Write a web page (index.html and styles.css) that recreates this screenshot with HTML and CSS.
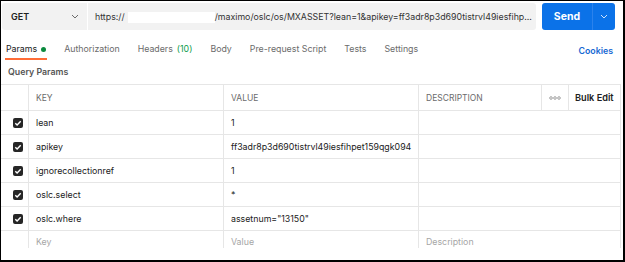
FILE: index.html
```html
<!DOCTYPE html>
<html lang="en">
<head>
    <meta charset="UTF-8">
    <meta name="viewport" content="width=device-width, initial-scale=1.0">
    <title>Request - Params</title>
    <link rel="stylesheet" href="styles.css">
</head>
<body>
    <div class="frame">
        <div class="topbar">
            <div class="method">
                <span>GET</span>
                <svg class="chev" width="8" height="5" viewBox="0 0 8 5"><path d="M1 1l3 3 3-3" fill="none" stroke="#6b6b6b" stroke-width="1"/></svg>
            </div>
            <div class="url">https://<span class="redact"></span>/maximo/oslc/os/MXASSET?lean=1&amp;apikey=ff3adr8p3d690tistrvl49iesfihp...</div>
            <div class="send">
                <span class="send-label">Send</span>
                <span class="send-more">
                    <svg width="8" height="5" viewBox="0 0 8 5"><path d="M1 1l3 3 3-3" fill="none" stroke="#cfe3fb" stroke-width="1"/></svg>
                </span>
            </div>
        </div>

        <div class="tabs">
            <span class="tab active">Params <i class="dot"></i></span>
            <span class="tab">Authorization</span>
            <span class="tab">Headers <em>(10)</em></span>
            <span class="tab">Body</span>
            <span class="tab">Pre-request Script</span>
            <span class="tab">Tests</span>
            <span class="tab">Settings</span>
            <span class="cookies">Cookies</span>
        </div>

        <div class="section-title">Query Params</div>

        <div class="params">
            <div class="row head">
                <div class="cell check"></div>
                <div class="cell">KEY</div>
                <div class="cell">VALUE</div>
                <div class="cell">DESCRIPTION</div>
                <div class="cell more">
                    <svg width="12" height="4" viewBox="0 0 12 4"><g fill="none" stroke="#8a8a8a" stroke-width="0.8"><circle cx="2" cy="2" r="1.3"/><circle cx="6" cy="2" r="1.3"/><circle cx="10" cy="2" r="1.3"/></g></svg>
                </div>
                <div class="cell bulk">Bulk Edit</div>
            </div>
            <div class="row">
                <div class="cell check"><span class="box"></span></div>
                <div class="cell">lean</div>
                <div class="cell">1</div>
                <div class="cell"></div>
            </div>
            <div class="row">
                <div class="cell check"><span class="box"></span></div>
                <div class="cell">apikey</div>
                <div class="cell">ff3adr8p3d690tistrvl49iesfihpet159qgk094</div>
                <div class="cell"></div>
            </div>
            <div class="row">
                <div class="cell check"><span class="box"></span></div>
                <div class="cell">ignorecollectionref</div>
                <div class="cell">1</div>
                <div class="cell"></div>
            </div>
            <div class="row">
                <div class="cell check"><span class="box"></span></div>
                <div class="cell">oslc.select</div>
                <div class="cell">*</div>
                <div class="cell"></div>
            </div>
            <div class="row">
                <div class="cell check"><span class="box"></span></div>
                <div class="cell">oslc.where</div>
                <div class="cell">assetnum="13150"</div>
                <div class="cell"></div>
            </div>
            <div class="row placeholder">
                <div class="cell check"></div>
                <div class="cell">Key</div>
                <div class="cell">Value</div>
                <div class="cell">Description</div>
            </div>
        </div>
    </div>
</body>
</html>
```

FILE: styles.css
```css
body {
    margin: 0;
    font-family: Inter, "Noto Sans", sans-serif;
    font-size: 8.8px;
    color: #212121;
    background: #fff;
}
.frame {
    width: 625px;
    height: 262px;
    box-sizing: border-box;
    border-style: solid;
    border-color: #000;
    border-width: 1px 2px 2px 1px;
    overflow: hidden;
}

/* request bar */
.topbar {
    display: flex;
    height: 27px;
    margin: 2px 0 0 1px;
}
.method {
    width: 85px;
    box-sizing: border-box;
    background: #f2f2f2;
    border-radius: 3px 0 0 3px;
    display: flex;
    align-items: center;
    justify-content: space-between;
    padding: 0 8px 0 9px;
    font-weight: 600;
    font-size: 9px;
}
.url {
    width: 448px;
    margin-left: 1px;
    box-sizing: border-box;
    background: #f2f2f2;
    border-radius: 0 3px 3px 0;
    padding: 0 3px 0 7px;
    line-height: 27px;
    white-space: nowrap;
    overflow: hidden;
    color: #333;
}
.redact {
    display: inline-block;
    vertical-align: middle;
    width: 87px;
    height: 11px;
    margin-left: 3px;
    background: #fff;
}
.send {
    width: 73px;
    margin-left: 6px;
    background: #0b72e8;
    border-radius: 3px;
    display: flex;
    color: #fff;
    font-weight: 700;
    font-size: 10.5px;
}
.send-label {
    width: 50px;
    display: flex;
    align-items: center;
    justify-content: center;
    border-right: 1px solid #2b82ec;
}
.send-more {
    flex: 1;
    display: flex;
    align-items: center;
    justify-content: center;
}

/* tabs */
.tabs {
    display: flex;
    gap: 16px;
    height: 30px;
    padding: 0 0 0 4px;
    box-sizing: border-box;
}
.tab {
    display: flex;
    align-items: center;
    gap: 4px;
    padding: 10px 1px 0;
    border-bottom: 2px solid transparent;
    color: #6b6b6b;
    line-height: 12px;
}
.tab.active {
    color: #212121;
    border-bottom-color: #ff6c37;
}
.tab em {
    font-style: normal;
    color: #0f9d4c;
}
.dot {
    width: 5px;
    height: 5px;
    border-radius: 50%;
    background: #0a8a3e;
}
.cookies {
    margin-left: auto;
    margin-right: 10px;
    padding-top: 10px;
    display: flex;
    align-items: center;
    color: #1769d3;
    font-weight: 600;
}

.section-title {
    padding: 6px 7px;
    line-height: 12px;
    font-weight: 600;
    color: #555;
}

/* params table */
.params {
    width: 620px;
    border-top: 1px solid #e6e6e6;
    border-right: 1px solid #e6e6e6;
    box-sizing: border-box;
}
.row {
    display: grid;
    grid-template-columns: 28px 195px 195px 1fr;
    height: 24px;
    border-bottom: 1px solid #e6e6e6;
    box-sizing: border-box;
}
.row.head {
    grid-template-columns: 28px 195px 195px 123px 27px 1fr;
    height: 26px;
    color: #6b6b6b;
    font-size: 8.5px;
}
.cell {
    display: flex;
    align-items: center;
    padding: 0 7px;
    border-right: 1px solid #e6e6e6;
    white-space: nowrap;
    overflow: hidden;
}
.cell:last-child {
    border-right: none;
}
.cell.check {
    padding: 0 0 0 12px;
}
.cell.more {
    justify-content: center;
    padding: 0;
}
.cell.bulk {
    color: #212121;
    font-weight: 600;
    font-size: 9.2px;
    padding: 0 0 0 6px;
}
.box {
    width: 10px;
    height: 10px;
    border-radius: 2px;
    background: #262626 url("data:image/svg+xml,%3Csvg xmlns='http://www.w3.org/2000/svg' viewBox='0 0 10 10'%3E%3Cpath d='M2.3 5.2l1.8 1.8 3.6-3.8' fill='none' stroke='%23fff' stroke-width='1.4'/%3E%3C/svg%3E") center / 10px 10px no-repeat;
}
.placeholder {
    height: 17px;
    color: #a6a6a6;
    border-bottom: none;
}
.placeholder .cell {
    align-items: flex-start;
    padding-top: 5px;
    line-height: 11px;
}
```
